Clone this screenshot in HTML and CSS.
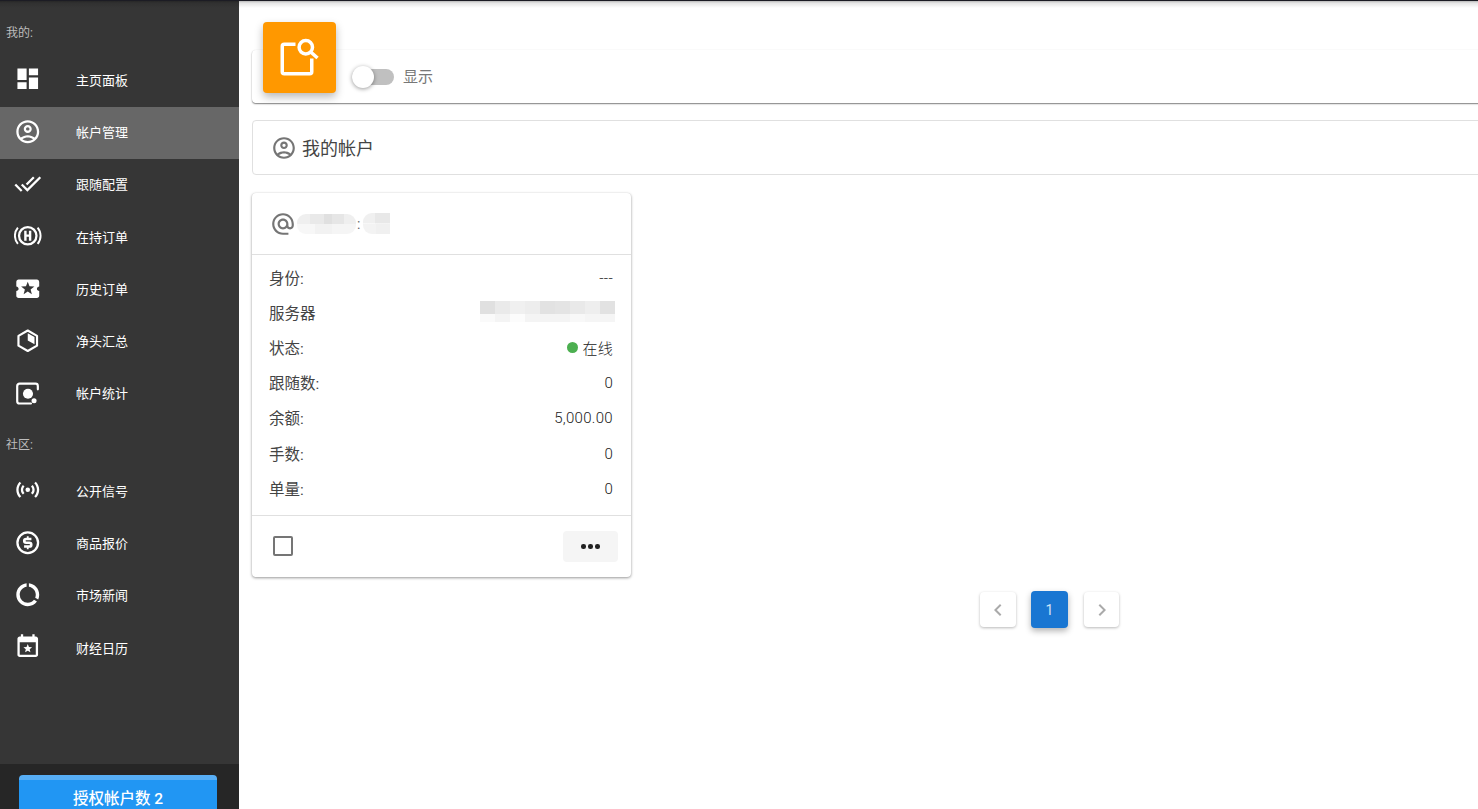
FILE: index.html
```html
<!DOCTYPE html>
<html lang="zh-CN">
<head>
<meta charset="utf-8">
<title>帐户管理</title>
<link rel="stylesheet" href="styles.css">
</head>
<body>
<div class="topline"></div>
<div class="app">
  <aside class="sidebar">
    <nav class="nav">
      <div class="nav-label first">我的:</div>
      <a class="nav-item"><svg class="nav-icon" viewBox="0 0 24 24"><path d="M3 13h8V3H3v10zm0 8h8v-6H3v6zm10 0h8V11h-8v10zm0-18v6h8V3h-8z"/></svg><span>主页面板</span></a>
      <a class="nav-item active"><svg class="nav-icon" viewBox="0 0 24 24"><path d="M12 2C6.48 2 2 6.48 2 12s4.48 10 10 10 10-4.48 10-10S17.52 2 12 2zM7.35 18.5C8.66 17.56 10.26 17 12 17s3.34.56 4.65 1.5c-1.31.94-2.91 1.5-4.65 1.5s-3.34-.56-4.65-1.5zm10.79-1.38C16.45 15.8 14.32 15 12 15s-4.45.8-6.14 2.12C4.7 15.73 4 13.95 4 12c0-4.42 3.58-8 8-8s8 3.58 8 8c0 1.95-.7 3.73-1.86 5.12z"/><path d="M12 6c-1.93 0-3.5 1.57-3.5 3.5S10.07 13 12 13s3.5-1.57 3.5-3.5S13.93 6 12 6zm0 5c-.83 0-1.5-.67-1.5-1.5S11.17 8 12 8s1.5.67 1.5 1.5S12.83 11 12 11z"/></svg><span>帐户管理</span></a>
      <a class="nav-item"><svg class="nav-icon" viewBox="0 0 24 24"><path d="M18 7l-1.41-1.41-6.34 6.34 1.41 1.41L18 7zm4.24-1.41L11.66 16.17 7.48 12l-1.41 1.41L11.66 19l12-12-1.42-1.41zM.41 13.41L6 19l1.41-1.41L1.83 12 .41 13.41z"/></svg><span>跟随配置</span></a>
      <a class="nav-item"><svg class="nav-icon" viewBox="0 0 24 24"><circle class="line" cx="12" cy="12" r="7.6" stroke-width="2"/><path class="line" stroke-width="1.7" d="M3.4 4.9a11 11 0 0 0 0 14.2M20.6 4.9a11 11 0 0 1 0 14.2"/><path d="M8.9 7.6h2.1v3.3h2V7.6h2.1v8.8H13v-3.5h-2v3.5H8.9z"/></svg><span>在持订单</span></a>
      <a class="nav-item"><svg class="nav-icon" viewBox="0 0 24 24"><path d="M20 12c0-1.1.9-2 2-2V6c0-1.1-.9-2-2-2H4c-1.1 0-1.99.9-1.99 2v4c1.1 0 1.99.9 1.99 2s-.89 2-2 2v4c0 1.1.9 2 2 2h16c1.1 0 2-.9 2-2v-4c-1.1 0-2-.9-2-2zm-4.42 4.8L12 14.5l-3.58 2.3 1.08-4.12-3.29-2.69 4.24-.25L12 5.8l1.54 3.95 4.24.25-3.29 2.69 1.09 4.11z"/></svg><span>历史订单</span></a>
      <a class="nav-item"><svg class="nav-icon" viewBox="0 0 24 24"><path class="line" stroke-width="1.9" stroke-linejoin="round" d="M12 3.1l8.1 4.6v8.6L12 20.9l-8.1-4.6V7.7z"/><path d="M12 5.4l5.9 3.4v6.3L12 11.8z"/></svg><span>净头汇总</span></a>
      <a class="nav-item"><svg class="nav-icon" viewBox="0 0 24 24"><path class="line" stroke-width="1.9" stroke-linecap="round" d="M20.8 9V6.1a2 2 0 0 0-2-2H4.8a2 2 0 0 0-2 2v13.3a2 2 0 0 0 2 2h10"/><circle cx="12.2" cy="12.9" r="4.4"/><circle cx="17.5" cy="19" r="2.2"/></svg><span>帐户统计</span></a>
      <div class="nav-label">社区:</div>
      <a class="nav-item"><svg class="nav-icon" viewBox="0 0 24 24"><path d="M4.93,4.93C3.12,6.74 2,9.24 2,12C2,14.76 3.12,17.26 4.93,19.07L6.34,17.66C4.89,16.22 4,14.22 4,12C4,9.79 4.89,7.78 6.34,6.34L4.93,4.93M19.07,4.93L17.66,6.34C19.11,7.78 20,9.79 20,12C20,14.22 19.11,16.22 17.66,17.66L19.07,19.07C20.88,17.26 22,14.76 22,12C22,9.24 20.88,6.74 19.07,4.93M7.76,7.76C6.67,8.85 6,10.35 6,12C6,13.65 6.67,15.15 7.76,16.24L9.17,14.83C8.45,14.11 8,13.11 8,12C8,10.89 8.45,9.89 9.17,9.17L7.76,7.76M16.24,7.76L14.83,9.17C15.55,9.89 16,10.89 16,12C16,13.11 15.55,14.11 14.83,14.83L16.24,16.24C17.33,15.15 18,13.65 18,12C18,10.35 17.33,8.85 16.24,7.76M12,10A2,2 0 0,0 10,12A2,2 0 0,0 12,14A2,2 0 0,0 14,12A2,2 0 0,0 12,10Z"/></svg><span>公开信号</span></a>
      <a class="nav-item"><svg class="nav-icon" viewBox="0 0 24 24"><circle class="line" cx="12" cy="12" r="9" stroke-width="2"/><path class="line" stroke-width="2.3" d="M15.2 8.7h-4.6a1.65 1.65 0 0 0 0 3.3h2.8a1.65 1.65 0 0 1 0 3.3H8.8"/><path class="line" stroke-width="1.6" d="M12 6.4v2M12 15.6v2"/></svg><span>商品报价</span></a>
      <a class="nav-item"><svg class="nav-icon" viewBox="0 0 24 24"><path d="M13,2.05V5.08C16.39,5.57 19,8.47 19,12C19,12.9 18.82,13.75 18.5,14.54L21.12,16.07C21.68,14.83 22,13.45 22,12C22,6.82 18.05,2.55 13,2.05M12,19A7,7 0 0,1 5,12C5,8.47 7.61,5.57 11,5.08V2.05C5.94,2.55 2,6.81 2,12A10,10 0 0,0 12,22C15.3,22 18.23,20.39 20.05,17.91L17.45,16.38C16.17,18 14.21,19 12,19Z"/></svg><span>市场新闻</span></a>
      <a class="nav-item"><svg class="nav-icon" viewBox="0 0 24 24"><path d="M19 3h-1V1h-2v2H8V1H6v2H5c-1.11 0-2 .89-2 2v14c0 1.1.89 2 2 2h14c1.1 0 2-.9 2-2V5c0-1.11-.9-2-2-2zm0 16H5V8h14v11z"/><path d="M12 9.6l1.05 2.55 2.75.22-2.1 1.8.65 2.68L12 15.4l-2.35 1.45.65-2.68-2.1-1.8 2.75-.22z"/></svg><span>财经日历</span></a>
    </nav>
    <div class="sidebar-foot"><button class="quota">授权帐户数 2</button></div>
  </aside>
  <main class="main">
    <section class="filter-card">
      <div class="filter-badge"><svg viewBox="0 0 48 48" class="filter-icon"><path d="M19.5 10.25H8.25a2 2 0 0 0-2 2v25.5a2 2 0 0 0 2 2h25.5a2 2 0 0 0 2-2V24.5"/><circle cx="29.8" cy="13.2" r="6.7"/><path d="M35 18.2l6.5 5.8"/></svg></div>
      <div class="switch"><span class="switch-track"></span><span class="switch-thumb"></span></div>
      <span class="switch-label">显示</span>
    </section>
    <section class="title-card">
      <svg class="title-icon" viewBox="0 0 24 24"><path d="M12 2C6.48 2 2 6.48 2 12s4.48 10 10 10 10-4.48 10-10S17.52 2 12 2zM7.35 18.5C8.66 17.56 10.26 17 12 17s3.34.56 4.65 1.5c-1.31.94-2.91 1.5-4.65 1.5s-3.34-.56-4.65-1.5zm10.79-1.38C16.45 15.8 14.32 15 12 15s-4.45.8-6.14 2.12C4.7 15.73 4 13.95 4 12c0-4.42 3.58-8 8-8s8 3.58 8 8c0 1.95-.7 3.73-1.86 5.12z"/><path d="M12 6c-1.93 0-3.5 1.57-3.5 3.5S10.07 13 12 13s3.5-1.57 3.5-3.5S13.93 6 12 6zm0 5c-.83 0-1.5-.67-1.5-1.5S11.17 8 12 8s1.5.67 1.5 1.5S12.83 11 12 11z"/></svg>
      <span class="title-text">我的帐户</span>
    </section>
    <section class="account-card">
      <header class="account-head">
        <svg class="at-icon" viewBox="0 0 24 24"><path d="M12 2C6.48 2 2 6.48 2 12s4.48 10 10 10h5v-2h-5c-4.34 0-8-3.66-8-8s3.66-8 8-8 8 3.66 8 8v1.43c0 .79-.71 1.57-1.5 1.57s-1.5-.78-1.5-1.57V12c0-2.76-2.24-5-5-5s-5 2.24-5 5 2.24 5 5 5c1.38 0 2.64-.56 3.54-1.47.65.89 1.77 1.47 2.96 1.47 1.97 0 3.5-1.6 3.5-3.57V12c0-5.52-4.48-10-10-10zm0 13c-1.66 0-3-1.34-3-3s1.34-3 3-3 3 1.34 3 3-1.34 3-3 3z"/></svg>
        <span class="blur blur-name"></span><span class="colon">:</span><span class="blur blur-id"></span>
      </header>
      <dl class="rows">
        <div class="row"><dt>身份:</dt><dd>---</dd></div>
        <div class="row"><dt>服务器</dt><dd><span class="blur blur-server"></span></dd></div>
        <div class="row"><dt>状态:</dt><dd><i class="dot"></i>在线</dd></div>
        <div class="row"><dt>跟随数:</dt><dd>0</dd></div>
        <div class="row"><dt>余额:</dt><dd>5,000.00</dd></div>
        <div class="row"><dt>手数:</dt><dd>0</dd></div>
        <div class="row"><dt>单量:</dt><dd>0</dd></div>
      </dl>
      <footer class="account-foot">
        <span class="checkbox"></span>
        <button class="more"><i></i><i></i><i></i></button>
      </footer>
    </section>
    <div class="pager">
      <button class="page"><svg viewBox="0 0 24 24"><path d="M15.41 7.41L14 6l-6 6 6 6 1.41-1.41L10.83 12z"/></svg></button>
      <button class="page current">1</button>
      <button class="page"><svg viewBox="0 0 24 24"><path d="M10 6L8.59 7.41 13.17 12l-4.58 4.59L10 18l6-6z"/></svg></button>
    </div>
  </main>
</div>
</body>
</html>
```
FILE: styles.css
```css
* { box-sizing: border-box; }
html, body { margin: 0; height: 100%; overflow: hidden; }
body { font-family: Roboto, "Noto Sans CJK SC", sans-serif; background: #fff; color: #333; }
.topline { position: absolute; left: 0; right: 0; top: 0; height: 8px; z-index: 5; pointer-events: none;
  background: linear-gradient(to bottom, #1c1c24 0, #1c1c24 1px, rgba(0,0,0,.28) 1px, rgba(0,0,0,.1) 3px, rgba(0,0,0,0) 8px); }
.app { display: flex; height: 809px; }

.sidebar { width: 239px; flex: none; background: #363636; display: flex; flex-direction: column; color: #fff; }
.nav { flex: 1; padding-top: 25px; }
.nav-label { font-size: 12px; line-height: 16px; color: #bdbdbd; padding-left: 6px; margin-top: 16px; height: 29px; }
.nav-label.first { margin-top: 0; height: 29.5px; }
.nav-item { display: flex; align-items: center; height: 52.3px; padding-bottom: 3px; color: #fff; font-size: 13px; }
.nav-item.active { background: #676767; }
.nav-icon { width: 27.5px; height: 27.5px; margin-left: 14px; margin-right: 34.5px; fill: #fff; flex: none; }
.nav-icon .line { fill: none; stroke: #fff; }
.sidebar-foot { height: 45px; background: #262626; padding: 11px 22px 0 19px; overflow: hidden; }
.quota { width: 198px; height: 43px; border: 0; border-top: 5px solid #57aef5; border-radius: 4px 4px 0 0; background: #2196f3; color: #fff;
  font: 500 15.5px/24px Roboto, "Noto Sans CJK SC", sans-serif; padding: 0; display: block; }

.main { flex: 1; min-width: 0; padding: 22px 0 0 13px; overflow: hidden; }
.filter-card { position: relative; margin-top: 28px; height: 53px; background: #fff; border-radius: 4px 0 0 4px; display: flex; align-items: center;
  padding-left: 100px; margin-right: -4px; box-shadow: 0 1px 1.5px rgba(0,0,0,.5), 0 0 1px rgba(0,0,0,.08); }
.filter-badge { position: absolute; left: 11px; top: -28px; width: 73px; height: 71px; background: #ff9800; border-radius: 4px; box-shadow: 0 4px 8px rgba(0,0,0,.28); display: flex; align-items: center; justify-content: center; }
.filter-icon { width: 48px; height: 48px; fill: none; stroke: #fff; stroke-width: 3.5; }
.switch { position: relative; width: 42px; height: 16px; flex: none; }
.switch-track { position: absolute; left: 0; top: 0; width: 42px; height: 16px; border-radius: 8px; background: #c0c0c0; }
.switch-thumb { position: absolute; left: 0; top: -3px; width: 22px; height: 22px; border-radius: 50%; background: #fff; box-shadow: 0 1px 4px rgba(0,0,0,.4); }
.switch-label { margin-left: 9px; font-size: 15px; color: #777; padding-bottom: 2px; }
.title-card { margin-top: 17px; margin-right: -4px; height: 55px; border: 1px solid #e0e0e0; border-radius: 4px 0 0 4px; display: flex; align-items: center; padding-left: 18px; font-size: 18px; color: #444; }
.title-icon { width: 26px; height: 26px; fill: #757575; margin-right: 5px; }
.title-text { padding-bottom: 2px; }
.account-card { margin-top: 18px; width: 379px; height: 384px; background: #fff; border-radius: 4px; box-shadow: 0 1px 3px rgba(0,0,0,.4), 0 0 1px rgba(0,0,0,.1); display: flex; flex-direction: column; }
.account-head { height: 62px; flex: none; border-bottom: 1px solid #e0e0e0; display: flex; align-items: center; padding-left: 18px; color: #666; font-size: 14px; }
.at-icon { width: 26px; height: 26px; fill: #757575; flex: none; }
.colon { margin: 0 3px 0 1px; }
.blur { display: block; }
.blur-name { width: 59px; height: 20px; border-radius: 9px; margin-left: 1px;
  background:
    linear-gradient(to right, #efefef 0 22%, #e9e9e9 22% 46%, #e0e0e0 46% 60%, #e6e6e6 60% 80%, #efefef 80%) top / 100% 50% no-repeat,
    linear-gradient(to right, #f7f7f7 0 30%, #f2f2f2 30% 60%, #f5f5f5 60%) bottom / 100% 50% no-repeat; }
.blur-id { width: 27px; height: 21px; border-radius: 9px 0 0 9px;
  background:
    linear-gradient(to right, #f0f0f0 0 45%, #e8e8e8 45%) top / 100% 50% no-repeat,
    linear-gradient(to right, #f3f3f3 0 50%, #f0f0f0 50%) bottom / 100% 50% no-repeat; }
.blur-server { width: 135px; height: 21px; margin-right: -2px; margin-top: -2px;
  background:
    linear-gradient(to right, #e0e0e0 0 15px, #eaeaea 15px 30px, #f0f0f0 30px 45px, #ededed 45px 60px, #e2e2e2 60px 75px, #e4e4e4 75px 90px, #e9e9e9 90px 105px, #eeeeee 105px 120px, #e2e2e2 120px) top / 100% 62% no-repeat,
    linear-gradient(to right, #fafafa 0 15px, #f4f4f4 15px 30px, #fcfcfc 30px 45px, #f4f4f4 45px 90px, #f8f8f8 90px 105px, #f5f5f5 105px) bottom / 100% 38% no-repeat; }
.rows { margin: 0; padding: 5px 18px 0 17px; flex: 1; }
.row { display: flex; justify-content: space-between; align-items: center; height: 35.2px; font-size: 15px; color: #444; }
.row dt, .row dd { margin: 0; display: flex; align-items: center; }
.row dt { font-size: 15.5px; padding-bottom: 2px; }
.row dd { font-weight: 300; letter-spacing: .3px; color: #222; }
.dot { width: 11px; height: 11px; border-radius: 50%; background: #4caf50; margin-right: 4px; }
.account-foot { height: 62px; flex: none; border-top: 1px solid #e0e0e0; display: flex; align-items: center; justify-content: space-between; padding: 0 13px 0 21px; }
.checkbox { width: 20px; height: 20px; border: 2px solid #757575; border-radius: 2px; margin-bottom: 2px; }
.more { width: 55px; height: 31px; border: 0; border-radius: 4px; background: #f5f5f5; display: flex; align-items: center; justify-content: center; gap: 2.5px; padding: 0; }
.more i { width: 4.5px; height: 4.5px; border-radius: 50%; background: #222; }
.pager { display: flex; justify-content: center; gap: 15px; margin-top: 14px; width: 1595px; align-items: center; }
.page { width: 36px; height: 35px; border: 0; border-radius: 4px; background: #fff; box-shadow: 0 1px 3px rgba(0,0,0,.28); padding: 0; display: flex; align-items: center; justify-content: center; font: 14px Roboto, sans-serif; color: #fff; }
.page:last-child { width: 35px; }
.page svg { width: 24px; height: 24px; fill: #aaa; }
.page.current { width: 37px; height: 37px; margin-right: 1px; background: #1976d2; color: #cfe3f6; box-shadow: 0 3px 6px rgba(0,0,0,.3); }
```
